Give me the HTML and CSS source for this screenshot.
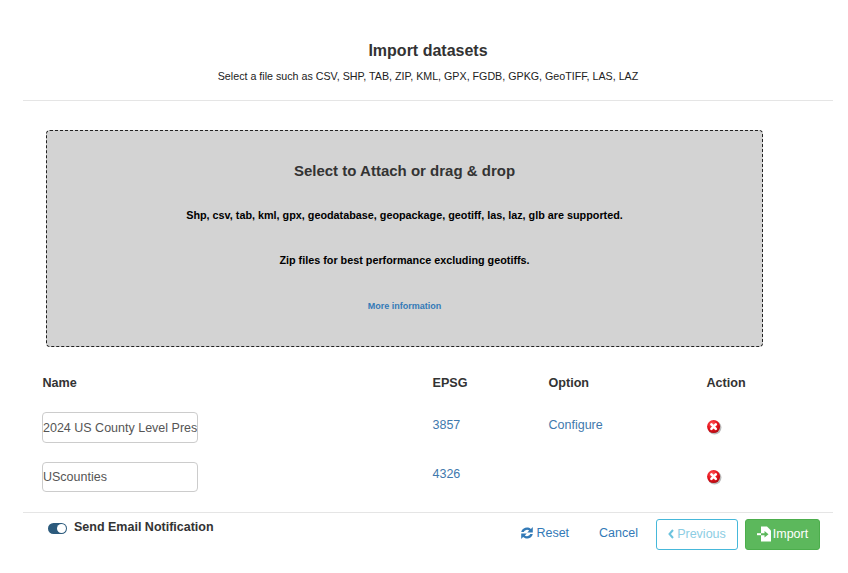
FILE: index.html
```html
<!DOCTYPE html>
<html lang="en">
<head>
<meta charset="utf-8">
<title>Import datasets</title>
<link rel="stylesheet" href="styles.css">
</head>
<body>
<div class="modal">
  <header class="head">
    <h1 class="title">Import datasets</h1>
    <p class="sub">Select a file such as CSV, SHP, TAB, ZIP, KML, GPX, FGDB, GPKG, GeoTIFF, LAS, LAZ</p>
  </header>
  <div class="body">
    <section class="drop">
      <h2 class="drop-title">Select to Attach or drag &amp; drop</h2>
      <p class="drop-line l1">Shp, csv, tab, kml, gpx, geodatabase, geopackage, geotiff, las, laz, glb are supported.</p>
      <p class="drop-line l2">Zip files for best performance excluding geotiffs.</p>
      <a class="more" href="#">More information</a>
    </section>
    <div class="table">
      <div class="row th">
        <div>Name</div><div>EPSG</div><div>Option</div><div>Action</div>
      </div>
      <div class="row r1">
        <div><input class="inp" type="text" value="2024 US County Level Presidential Results"></div>
        <div class="cell"><a href="#">3857</a></div>
        <div class="cell"><a href="#">Configure</a></div>
        <div class="cell act"><svg class="del" viewBox="0 0 16 16"><use href="#x"/></svg></div>
      </div>
      <div class="row r2">
        <div><input class="inp" type="text" value="UScounties"></div>
        <div class="cell"><a href="#">4326</a></div>
        <div class="cell"></div>
        <div class="cell act"><svg class="del" viewBox="0 0 16 16"><use href="#x"/></svg></div>
      </div>
    </div>
  </div>
  <footer class="foot">
    <div class="notify">
      <span class="toggle"><span class="knob"></span></span>
      <span class="notify-label">Send Email Notification</span>
    </div>
    <div class="actions">
      <a class="link" href="#"><svg class="ic-reset" viewBox="0 0 14 14"><path d="M1.2 6A6 6 0 0 1 10.9 2.9L12.8 1V6.6H7.2L9.2 4.6A3.6 3.6 0 0 0 3.7 6ZM12.8 8A6 6 0 0 1 3.1 11.1L1.2 13V7.4H6.8L4.8 9.4A3.6 3.6 0 0 0 10.3 8Z"/></svg>Reset</a>
      <a class="link cancel" href="#">Cancel</a>
      <button class="btn prev" type="button"><svg class="ic-chev" viewBox="0 0 6 10"><path d="M5 1 1.5 5 5 9" /></svg>Previous</button>
      <button class="btn imp" type="button"><svg class="ic-imp" viewBox="0 0 16 16"><path class="doc" d="M4 0.5H10L14 4.5V15.5H4Z"/><path class="arr" d="M4 7.2H7.5V5L11.5 8.2 7.5 11.4V9.2H4Z"/><path class="doc" d="M0 7.2H4V9.2H0Z"/></svg>Import</button>
    </div>
  </footer>
</div>
<svg class="defs" width="0" height="0">
  <defs>
    <radialGradient id="rg" cx="40%" cy="30%" r="75%">
      <stop offset="0" stop-color="#ff5a5a"/><stop offset=".55" stop-color="#e8121c"/><stop offset="1" stop-color="#a80a10"/>
    </radialGradient>
    <symbol id="x" viewBox="0 0 16 16">
      <circle cx="8.6" cy="8.6" r="6.9" fill="#777" opacity=".5"/>
      <circle cx="7.6" cy="7.6" r="6.5" fill="url(#rg)"/>
      <path d="M5.4 5.4 9.8 9.8M9.8 5.4 5.4 9.8" stroke="#fff" stroke-width="2.6" stroke-linecap="round"/>
    </symbol>
  </defs>
</svg>
</body>
</html>
```
FILE: styles.css
```css
* { box-sizing: border-box; }
html, body { margin: 0; padding: 0; background: #fff; }
body { font-family: "Liberation Sans", Arial, sans-serif; color: #333; font-size: 14px; }
a { color: #337ab7; text-decoration: none; }
.modal { width: 810px; margin-left: 23px; height: 573px; overflow: hidden; }
.head { height: 101px; border-bottom: 1px solid #e5e5e5; padding-top: 41px; text-align: center; }
.title { margin: 0; font: 700 16px/20px "Liberation Sans", sans-serif; color: #333; }
.sub { margin: 7px 0 0; font: 400 10.7px/16px "Liberation Sans", sans-serif; color: #222; }
.body { height: 411px; padding: 29px 0 0 23px; }
.drop { width: 717px; height: 217px; background: #d3d3d3; border: 1px dashed #222; border-radius: 4px; text-align: center; padding-top: 30px; }
.drop-title { margin: 0; font: 700 15px/20px "Liberation Sans", sans-serif; color: #333; }
.drop-line { margin: 0; font: 700 10.8px/16px "Liberation Sans", sans-serif; color: #000; }
.l1 { margin-top: 26px; }
.l2 { margin-top: 29px; }
.more { display: block; margin-top: 32px; font: 700 9px/12px "Liberation Sans", sans-serif; color: #337ab7; }
.table { margin: 27px 0 0 -4px; }
.row { display: grid; grid-template-columns: 390.5px 116px 158px 100px; }
.th { font-weight: 700; font-size: 12.6px; line-height: 18px; height: 18px; }
.th > div:first-child { padding-left: 0.5px; }
.r1 { margin-top: 20px; height: 31px; }
.r2 { margin-top: 19px; height: 30px; }
.cell { font-size: 12.5px; line-height: 18px; padding-top: 4px; }
.r2 .cell { padding-top: 3px; }
.cell a { color: #3f79ad; }
.inp { width: 156px; height: 31px; border: 1px solid #ccc; border-radius: 4px; padding: 0; font: 400 12.5px "Liberation Sans", sans-serif; color: #555; background: #fff; outline: 0; }
.r2 .inp { height: 30px; }
.act, .r2 .act { padding-top: 7px; }
.del { display: block; width: 16px; height: 16px; margin-left: -1px; }
.foot { border-top: 1px solid #e5e5e5; display: flex; justify-content: space-between; }
.notify { display: flex; align-items: flex-start; padding: 5px 0 0 25px; gap: 7px; }
.toggle { width: 19px; height: 11px; margin-top: 5px; border-radius: 6px; background: #2c5b7d; position: relative; display: block; }
.knob { position: absolute; right: 1px; top: 1px; width: 9px; height: 9px; border-radius: 50%; background: #fff; }
.notify-label { font: 700 12.5px/17px "Liberation Sans", sans-serif; color: #333; padding-top: 1px; }
.actions { display: flex; align-items: flex-start; padding: 6px 13px 0 0; }
.link { font-size: 12.5px; line-height: 18px; padding-top: 5px; color: #337ab7; display: flex; align-items: center; }
.cancel { margin-left: 30px; margin-right: 18px; }
.ic-reset { width: 14px; height: 14px; fill: #337ab7; margin-right: 2px; }
.btn { height: 31px; border-radius: 3px; font: 400 12.5px "Liberation Sans", sans-serif; padding: 0 0 1px; display: flex; align-items: center; justify-content: center; }
.prev { width: 82px; background: #fff; border: 1px solid #46b8da; color: #8ccde3; }
.ic-chev { width: 6px; height: 10px; fill: none; stroke: #6cc3de; stroke-width: 2; margin-right: 3px; }
.imp { width: 75px; margin-left: 7px; background: #5cb85c; border: 1px solid #4cae4c; color: #fff; }
.ic-imp { width: 16px; height: 16px; margin-right: 0; }
.doc { fill: #fff; }
.arr { fill: #5cb85c; }
.defs { position: absolute; }
```
